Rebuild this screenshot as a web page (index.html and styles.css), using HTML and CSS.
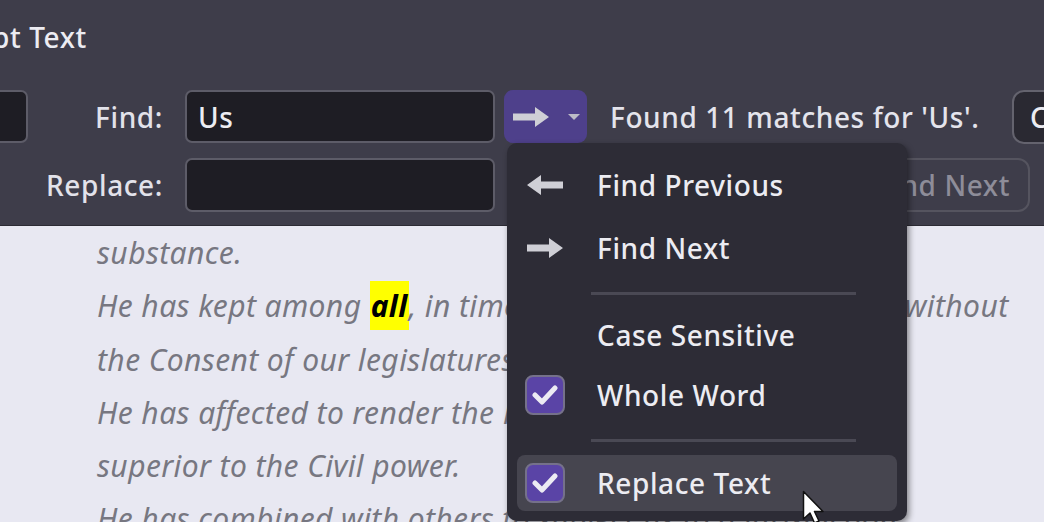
FILE: index.html
```html
<!DOCTYPE html>
<html>
<head>
<meta charset="utf-8">
<link rel="stylesheet" href="styles.css">
</head>
<body>
<div class="page">
  <header class="header">
    <div class="title">pt Text</div>
    <div class="row row-find">
      <div class="stub-input"></div>
      <label class="lbl">Find:</label>
      <div class="field">Us</div>
      <button class="go-btn">
        <svg class="go-arrow" width="38" height="24" viewBox="0 0 38 24"><path d="M1 8.5H23V2L37 12L23 22V15.5H1Z" fill="#cfcfd6"/></svg>
        <svg class="caret" width="12" height="8" viewBox="0 0 12 8"><path d="M0 1H12L6 7Z" fill="#bdbcc7"/></svg>
      </button>
      <span class="status">Found 11 matches for 'Us'.</span>
      <button class="close-btn">Close</button>
    </div>
    <div class="row row-replace">
      <div class="stub-space"></div>
      <label class="lbl">Replace:</label>
      <div class="field"></div>
      <button class="next-btn">Find Next</button>
    </div>
  </header>
  <main class="doc">
    <p class="line">substance.</p>
    <p class="line">He has kept among <mark class="hit">all</mark>, in times of peace, Standing Armies without</p>
    <p class="line">the Consent of our legislatures.</p>
    <p class="line">He has affected to render the Military independent of and</p>
    <p class="line">superior to the Civil power.</p>
    <p class="line">He has combined with others to subject us to a jurisdiction</p>
  </main>

  <div class="menu">
    <div class="item item-prev">
      <span class="ico"><svg width="38" height="24" viewBox="0 0 38 24"><path d="M37 8.5H15V2L1 12L15 22V15.5H37Z" fill="#cfcfd6"/></svg></span>
      <span class="txt">Find Previous</span>
    </div>
    <div class="item item-next">
      <span class="ico"><svg width="38" height="24" viewBox="0 0 38 24"><path d="M1 8.5H23V2L37 12L23 22V15.5H1Z" fill="#cfcfd6"/></svg></span>
      <span class="txt">Find Next</span>
    </div>
    <div class="sep sep-a"></div>
    <div class="item item-case">
      <span class="ico"></span>
      <span class="txt">Case Sensitive</span>
    </div>
    <div class="item item-whole">
      <span class="ico"><span class="check"><svg width="26" height="22" viewBox="0 0 26 22"><path d="M3 11L10 18L23 4" fill="none" stroke="#ecebf3" stroke-width="5" stroke-linecap="round" stroke-linejoin="round"/></svg></span></span>
      <span class="txt">Whole Word</span>
    </div>
    <div class="sep sep-b"></div>
    <div class="item item-replace hover">
      <span class="ico"><span class="check"><svg width="26" height="22" viewBox="0 0 26 22"><path d="M3 11L10 18L23 4" fill="none" stroke="#ecebf3" stroke-width="5" stroke-linecap="round" stroke-linejoin="round"/></svg></span></span>
      <span class="txt">Replace Text</span>
    </div>
  </div>

  <svg class="cursor" width="24" height="36" viewBox="0 0 24 36"><path d="M1.5 1.5V29L8 23L12.5 33L17 31L12.5 21.5H21Z" fill="#ffffff" stroke="#111" stroke-width="1.5" stroke-linejoin="round"/></svg>
</div>
</body>
</html>
```

FILE: styles.css
```css
* { box-sizing: border-box; }
html, body { margin: 0; padding: 0; }
body {
  width: 1044px;
  height: 522px;
  overflow: hidden;
  background: #e8e8f2;
  font-family: "Noto Sans", "Liberation Sans", sans-serif;
  font-size: 28px;
  font-weight: 500;
  letter-spacing: 0.6px;
}
.page {
  position: relative;
  width: 1044px;
  height: 522px;
  overflow: hidden;
}
.header {
  background: #3e3d4a;
  padding: 16px 0 13px 0;
  border-bottom: 1px solid #2c2b34;
  color: #e6e6ee;
}
.title {
  height: 42px;
  line-height: 42px;
  margin-left: -8px;
  margin-bottom: 32px;
  color: #ececf2;
}
.row {
  display: flex;
  align-items: center;
}
.row-find { height: 53px; margin-bottom: 15px; }
.row-replace { height: 54px; }
.stub-input {
  width: 60px;
  height: 53px;
  margin-left: -32px;
  background: #1e1d24;
  border: 2px solid #5d5c68;
  border-radius: 7px;
  flex: none;
}
.stub-space { width: 28px; flex: none; }
.lbl {
  width: 135px;
  text-align: right;
  color: #e2e2ea;
  flex: none;
}
.field {
  margin-left: 22px;
  width: 310px;
  height: 100%;
  background: #1e1d24;
  border: 2px solid #5d5c68;
  border-radius: 7px;
  padding-left: 11px;
  display: flex;
  align-items: center;
  color: #ececf2;
  flex: none;
}
.go-btn {
  margin-left: 9px;
  width: 83px;
  height: 53px;
  border: none;
  border-radius: 9px;
  background: #4e408b;
  display: flex;
  align-items: center;
  padding: 0 0 0 8px;
  flex: none;
}
.go-arrow { display: block; }
.caret { display: block; margin-left: 18px; }
.status {
  margin-left: 23px;
  color: #e4e4ec;
  white-space: nowrap;
}
.close-btn {
  margin-left: auto;
  margin-right: -60px;
  width: 92px;
  height: 54px;
  background: #2a2932;
  border: 2px solid #64636e;
  border-radius: 12px;
  color: #ececf2;
  font: inherit;
  letter-spacing: inherit;
  text-align: left;
  padding-left: 16px;
  flex: none;
}
.next-btn {
  margin-left: auto;
  margin-right: 14px;
  height: 54px;
  padding: 0 18px;
  background: #3e3d4a;
  border: 2px solid #55545f;
  border-radius: 12px;
  color: #8e8d99;
  font: inherit;
  letter-spacing: inherit;
  flex: none;
}
.doc {
  padding-left: 97px;
  font-style: italic;
  font-weight: 400;
  font-size: 30px;
  letter-spacing: 0.4px;
  color: #777781;
}
.line {
  margin: 0;
  height: 53.3px;
  line-height: 53.3px;
  white-space: nowrap;
}
.hit {
  background: #ffff00;
  color: #000;
  font-weight: 700;
  padding: 4px 1px;
}
.menu {
  position: absolute;
  left: 507px;
  top: 143px;
  width: 400px;
  height: 378px;
  background: #2d2c36;
  border-radius: 10px;
  box-shadow: 2px 3px 6px rgba(0,0,0,0.45);
  padding: 14px 10px 8px 10px;
  display: flex;
  flex-direction: column;
  color: #ececf2;
}
.item {
  height: 56px;
  display: flex;
  align-items: center;
  border-radius: 8px;
  padding-left: 8px;
  flex: none;
}
.item-next { margin-top: 7px; }
.item-whole { margin-top: 4px; }
.hover { background: #46454f; }
.ico {
  width: 40px;
  height: 40px;
  display: flex;
  align-items: center;
  justify-content: center;
  flex: none;
}
.txt { margin-left: 32px; white-space: nowrap; }
.check {
  width: 40px;
  height: 40px;
  border-radius: 8px;
  background: #5a44a6;
  border: 2px solid #75718a;
  display: flex;
  align-items: center;
  justify-content: center;
}
.sep {
  height: 3px;
  background: #4a4954;
  margin: 16px 41px 12px 74px;
  flex: none;
}
.sep-b { margin-bottom: 13px; }
.cursor {
  position: absolute;
  left: 802px;
  top: 490px;
}
```
